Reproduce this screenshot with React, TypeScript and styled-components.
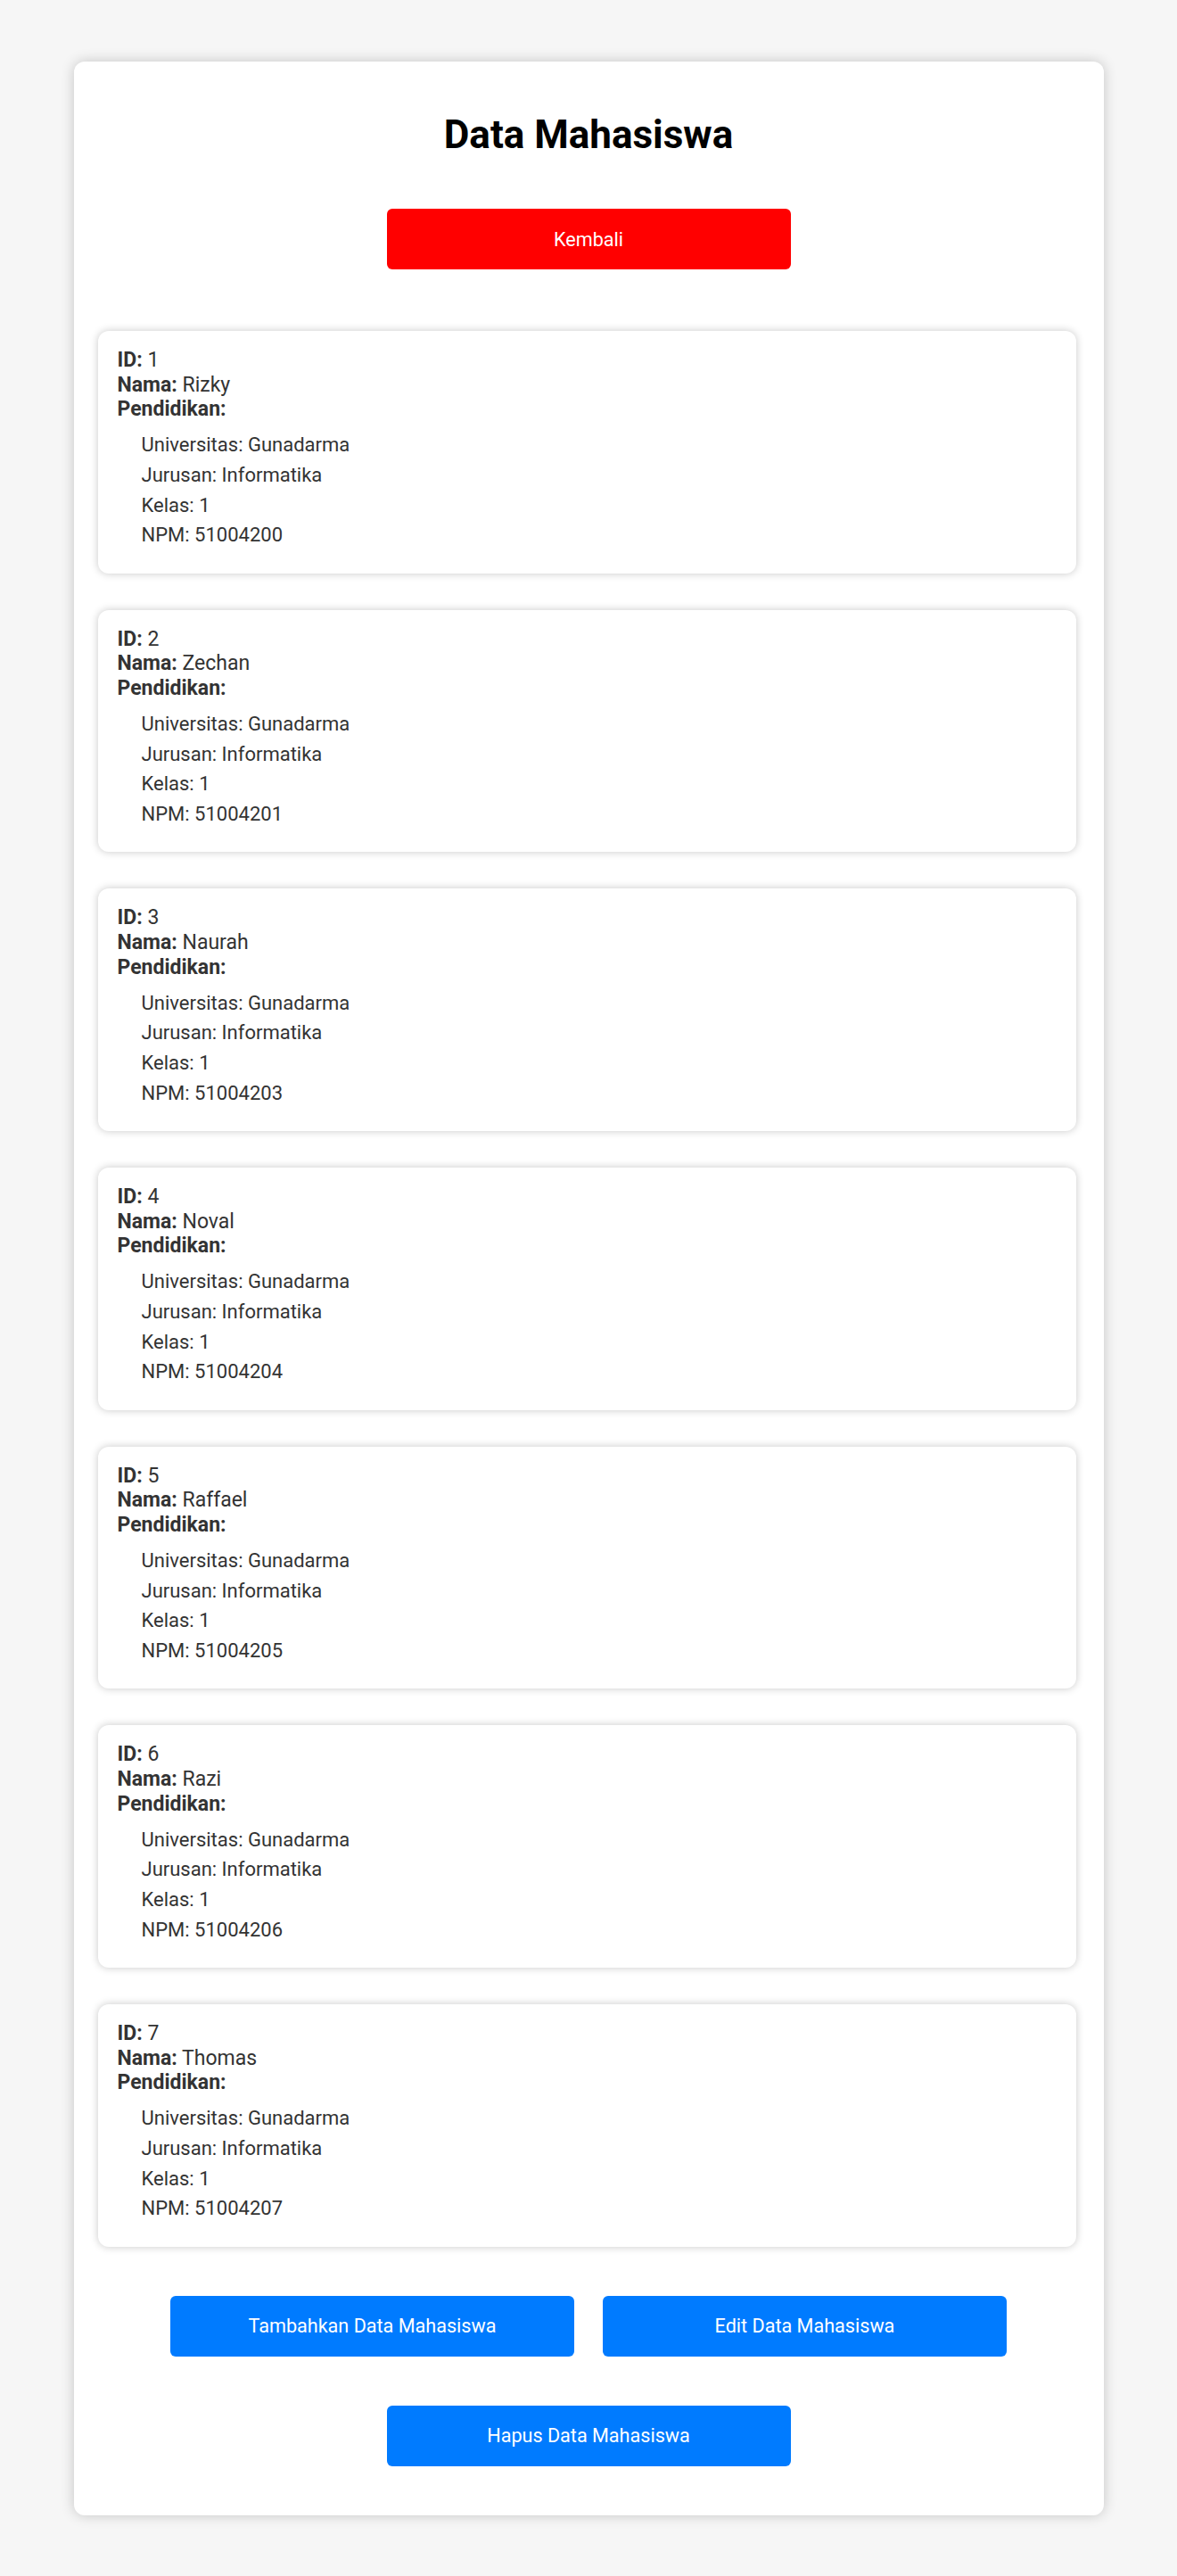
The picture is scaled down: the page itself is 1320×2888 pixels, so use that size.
import styled, { createGlobalStyle } from "styled-components"

const GlobalStyle = createGlobalStyle`
    body {
        margin: 0;
        background-color: #f6f6f6;
        font-family: Roboto, "Liberation Sans", sans-serif;
    }
`

const Page = styled.div`
    padding: 69px 0 68px;
`

const Container = styled.main`
    width: 1155px;
    margin: 0 auto;
    box-sizing: border-box;
    padding: 56px 27px 55px;
    background-color: #fff;
    border-radius: 12px;
    box-shadow: 0 0 15px rgba(0, 0, 0, 0.2);
`

const Title = styled.h1`
    margin: 0 0 57px;
    text-align: center;
    font-size: 44px;
    font-weight: 700;
    color: #000;
`

const Button = styled.button<{ $danger?: boolean }>`
    display: block;
    width: 453px;
    height: 68px;
    border: none;
    border-radius: 6px;
    background-color: ${(p) => (p.$danger ? "#ff0000" : "#007bff")};
    color: #fff;
    font-family: Roboto, "Liberation Sans", sans-serif;
    font-size: 21.6px;
    cursor: pointer;
`

const CenterButton = styled(Button)`
    margin: 0 auto;
`

const CardList = styled.div`
    display: flex;
    flex-direction: column;
    gap: 41px;
    margin-top: 69px;
`

const Card = styled.div`
    width: 1097px;
    box-sizing: border-box;
    padding: 19px 22px 25.7px;
    border-radius: 12px;
    background-color: #fff;
    box-shadow: 0 0 10px rgba(0, 0, 0, 0.22);
    color: #333;
`

const Line = styled.p`
    margin: 0;
    font-size: 23px;
    line-height: 27.6px;
`

const Education = styled.ul`
    margin: 9.4px 0 0;
    padding-left: 27px;
    list-style: none;
`

const EducationItem = styled.li`
    font-size: 22px;
    line-height: 33.7px;
`

const ButtonRow = styled.div`
    display: flex;
    justify-content: center;
    gap: 32px;
    margin: 55px 0;
`

const students = [
    { id: 1, nama: "Rizky", npm: "51004200" },
    { id: 2, nama: "Zechan", npm: "51004201" },
    { id: 3, nama: "Naurah", npm: "51004203" },
    { id: 4, nama: "Noval", npm: "51004204" },
    { id: 5, nama: "Raffael", npm: "51004205" },
    { id: 6, nama: "Razi", npm: "51004206" },
    { id: 7, nama: "Thomas", npm: "51004207" },
]

export default function App() {
    return (
        <Page>
            <GlobalStyle />
            <Container>
                <Title>Data Mahasiswa</Title>
                <CenterButton $danger type="button">Kembali</CenterButton>
                <CardList>
                    {students.map((s) => (
                        <Card key={s.id}>
                            <Line><strong>ID:</strong> {s.id}</Line>
                            <Line><strong>Nama:</strong> {s.nama}</Line>
                            <Line><strong>Pendidikan:</strong></Line>
                            <Education>
                                <EducationItem>Universitas: Gunadarma</EducationItem>
                                <EducationItem>Jurusan: Informatika</EducationItem>
                                <EducationItem>Kelas: 1</EducationItem>
                                <EducationItem>NPM: {s.npm}</EducationItem>
                            </Education>
                        </Card>
                    ))}
                </CardList>
                <ButtonRow>
                    <Button type="button">Tambahkan Data Mahasiswa</Button>
                    <Button type="button">Edit Data Mahasiswa</Button>
                </ButtonRow>
                <CenterButton type="button">Hapus Data Mahasiswa</CenterButton>
            </Container>
        </Page>
    )
}
